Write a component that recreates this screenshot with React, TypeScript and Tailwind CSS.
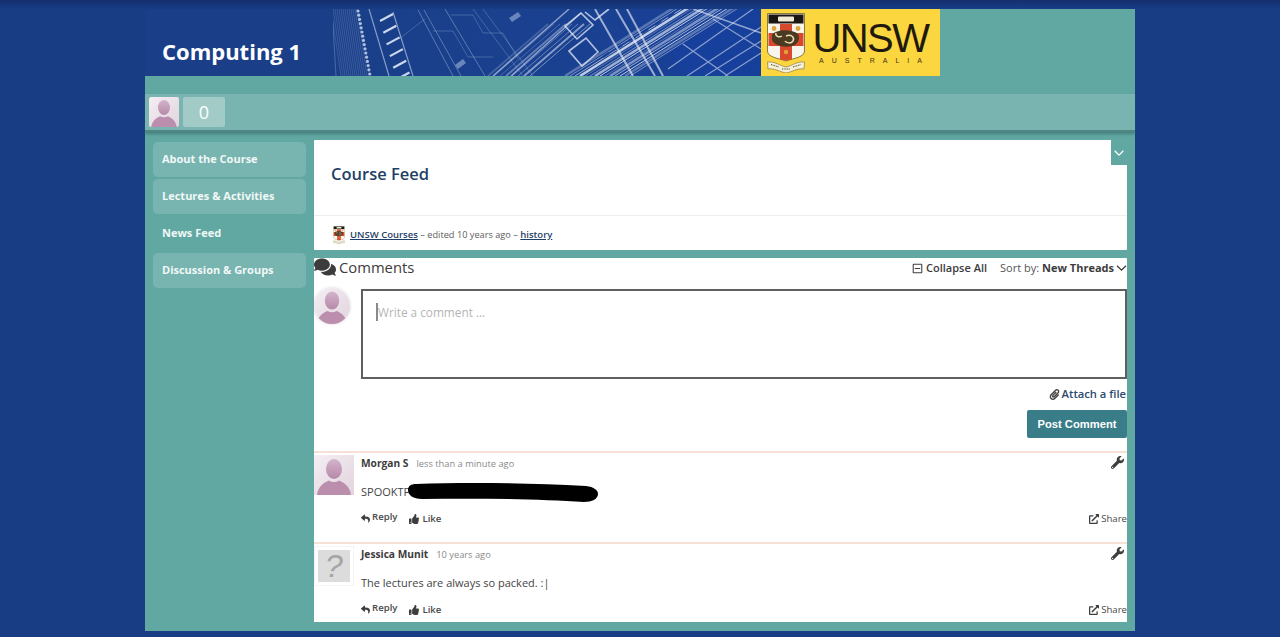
import { FaComments, FaRegMinusSquare, FaPaperclip, FaWrench, FaReply, FaThumbsUp, FaExternalLinkAlt } from "react-icons/fa";

const font = "font-['Open_Sans',sans-serif]";

function Chevron({ className = "" }: { className?: string }) {
  return (
    <svg viewBox="0 0 12 7" fill="none" stroke="currentColor" strokeWidth="1.5" className={className}>
      <path d="M0.8 0.8 L6 6 L11.2 0.8" />
    </svg>
  );
}

function Avatar({ className = "" }: { className?: string }) {
  return (
    <svg viewBox="0 0 40 40" className={className}>
      <defs>
        <linearGradient id="avbg" x1="0" y1="0" x2="1" y2="1">
          <stop offset="0" stopColor="#f4eef3" />
          <stop offset="1" stopColor="#e2d4de" />
        </linearGradient>
        <linearGradient id="avfg" x1="0" y1="0" x2="0" y2="1">
          <stop offset="0" stopColor="#d4b4cb" />
          <stop offset="1" stopColor="#b688a9" />
        </linearGradient>
      </defs>
      <rect width="40" height="40" fill="url(#avbg)" />
      <ellipse cx="20" cy="14" rx="8" ry="10" fill="url(#avfg)" />
      <path d="M3 40 C4 31 11 27 15 25.5 C18 27.5 22 27.5 25 25.5 C29 27 36 31 37 40 Z" fill="#bb8eae" />
    </svg>
  );
}

function Blueprint() {
  const rungs = [];
  for (let i = 0; i < 6; i++) {
    rungs.push(
      <path key={i} d={`M${47 + i * 3.3} ${12 + i * 11.7} L${60 + i * 3.3} ${5 + i * 11.7}`} stroke="#d5e0f3" strokeOpacity={0.95} strokeWidth={2.2} />,
    );
  }
  const hatch = [];
  for (let i = 0; i < 14; i++) {
    hatch.push(<path key={i} d={`M${-2 + i * 2} 0 L${8 + i * 2} 67`} stroke="#b9cbea" strokeOpacity={0.28} strokeWidth={0.7} />);
  }
  const beads = [];
  for (let i = 0; i < 16; i++) {
    beads.push(<circle key={i} cx={25 + i * 0.78} cy={2 + i * 4.2} r={1.6} fill="#d3dff3" fillOpacity={0.8} />);
  }
  const band = [];
  for (let i = 0; i < 14; i++) {
    const o = i * 5;
    band.push(
      <path key={i} d={`M${232 + o} 67 L${345 + o} -4`} stroke="#eef3fb" strokeOpacity={0.3 + (i % 4) * 0.16} strokeWidth={i % 3 === 0 ? 2.6 : 1} />,
    );
  }
  const dashes = [];
  for (let i = 0; i < 7; i++) {
    dashes.push(<path key={i} d={`M${270 + i * 13} ${48 - i * 8} l6 -4`} stroke="#183f92" strokeWidth={2.4} />);
  }
  const faint = [];
  for (let i = 0; i < 8; i++) {
    faint.push(<path key={i} d={`M${155 + i * 6} 67 L${215 + i * 6} 15`} stroke="#dbe5f6" strokeOpacity={0.2 + i * 0.06} strokeWidth={i % 3 === 0 ? 1.8 : 0.8} />);
  }
  return (
    <svg viewBox="0 0 428 67" preserveAspectRatio="none" className="h-[67px] w-[428px] shrink-0">
      <defs>
        <linearGradient id="bpbg" x1="0" y1="0" x2="1" y2="0">
          <stop offset="0" stopColor="#1a3f88" />
          <stop offset="0.6" stopColor="#1a4191" />
          <stop offset="1" stopColor="#163f9b" />
        </linearGradient>
        <filter id="bpblur" x="-5%" y="-5%" width="110%" height="110%">
          <feGaussianBlur stdDeviation="0.35" />
        </filter>
        <clipPath id="bpclip"><rect width="428" height="67" /></clipPath>
      </defs>
      <rect width="428" height="67" fill="url(#bpbg)" />
      <g fill="none" filter="url(#bpblur)" clipPath="url(#bpclip)">
        {hatch}
        {beads}
        <path d="M-1 0 L3 67" stroke="#b9cbea" strokeOpacity="0.3" />
        <path d="M36 0 L56 67 M60 3 L80 67" stroke="#c9d8f0" strokeOpacity="0.6" strokeWidth="1.2" />
        {rungs}
        <path d="M85 1 L120 67 M91 1 L128 67 M112 0 L152 67" stroke="#c9d8f0" strokeOpacity="0.42" strokeWidth="0.9" />
        <path d="M100 22 L120 22 L135 48 L160 48 M118 6 L140 6 L150 24 L170 24 L185 50 M66 30 L92 10" stroke="#c9d8f0" strokeOpacity="0.3" strokeWidth="0.8" />
        <path d="M122 56 L130 50 L133 54 L125 60 Z M176 9 L185 3 L188 7 L179 13 Z" fill="#a9bfe3" fillOpacity="0.55" />
        <path d="M140 0 L190 67 M150 0 L200 67" stroke="#c9d8f0" strokeOpacity="0.32" strokeWidth="0.8" />
        {faint}
        <path d="M160 67 L236 0 M178 67 L248 4" stroke="#e6edf9" strokeOpacity="0.55" strokeWidth="1.6" />
        <path d="M232 17 L248 4 L260 16 L244 30 Z M236 42 L253 29 L265 43 L249 57 Z M252 3 L262 11 L276 0" stroke="#e8eef9" strokeOpacity="0.75" strokeWidth="1.6" />
        {band}
        {dashes}
        <path d="M283 0 L322 67 M294 0 L330 67 M262 0 L300 67" stroke="#f3f6fc" strokeOpacity="0.6" strokeWidth="2" />
        <path d="M337 44 L395 6 L428 30 L428 42 L392 67 L354 67 Z" fill="#163f9b" />
        <path d="M354 67 L428 18 M372 67 L428 32 M392 67 L428 44 M335 60 L420 0 M350 35 L395 67 M380 10 L428 40" stroke="#e6edf9" strokeOpacity="0.55" strokeWidth="1.3" />
        <path d="M360 0 L428 24" stroke="#f3f6fc" strokeOpacity="0.55" strokeWidth="1.6" />
      </g>
    </svg>
  );
}

function Crest({ className = "" }: { className?: string }) {
  return (
    <svg viewBox="0 0 38 60" className={className}>
      <path d="M0.5 0.5 H37.5 V38 C37.5 44 28 45 19 48 C10 45 0.5 44 0.5 38 Z" fill="#f8f5ec" stroke="#8b7a3e" strokeWidth="1" />
      <rect x="1.5" y="1.5" width="35" height="9" fill="#1b1611" />
      <rect x="11" y="3.5" width="16" height="5" rx="1" fill="#efe9d6" />
      <path d="M13 11 H25 V46.5 L19 47.5 L13 46.5 Z M1.5 20 H36.5 V33 H1.5 Z" fill="#d8482c" />
      <circle cx="7" cy="15.5" r="2.4" fill="#e0a23a" />
      <circle cx="31" cy="15.5" r="2.4" fill="#e0a23a" />
      <circle cx="19" cy="39" r="2.2" fill="#e0a23a" />
      <path d="M5 22 C9 16 25 16 31 21 C34 26 30 32 25 33 C16 35 7 32 5 27 Z" fill="#4a3a22" />
      <path d="M9 20 C8 23 12 25 15 23 M19 23 C24 21 28 24 26 28 C24 31 19 30 18 28" fill="none" stroke="#eddfb5" strokeWidth="1.5" />
      <path d="M0.5 49 C8 48 13 53 19 54 C25 53 30 48 37.5 49 L37 56 C30 55 25 59 19 60 C13 59 8 55 1 56 Z" fill="#f4efd9" stroke="#8b7a3e" strokeWidth="0.7" />
      <path d="M4 51.5 L12 54 M15 56 L23 56 M26 54 L34 51.5" stroke="#4d4530" strokeWidth="1" strokeDasharray="1 0.7" />
    </svg>
  );
}

function Comment({ avatar, name, time, text, scribble, className }: { avatar: React.ReactNode; name: string; time: string; text: string; scribble?: boolean; className: string }) {
  return (
    <div className={`flex border-t-2 border-[#f7e0d5] ${className}`}>
      <div className="w-[47px] shrink-0 pt-[2px]">{avatar}</div>
      <div className="flex min-w-0 flex-1 flex-col">
        <div className="flex h-[22px] items-center">
          <span className="text-[10.2px] font-bold text-[#3c3c3c]">{name}</span>
          <span className="ml-[8px] text-[9.3px] text-[#8a8a8a]">{time}</span>
          <FaWrench className="mr-[3px] ml-auto size-[13px] -translate-y-[2px] text-[#3d3d3d]" />
        </div>
        <div className="relative mt-[8px] h-[18px] text-[11px] leading-[18px] text-[#444]">
          {text}
          {scribble && (
            <svg viewBox="0 0 190 21" className="absolute top-[-1px] left-[47px] h-[21px] w-[190px]">
              <path d="M8 2 C60 0 120 1 178 4 C186 5 190 8 190 12 C190 17 184 20 176 20 C130 17 70 16 14 17 C5 17 0 13 0 8 C0 4 3 2 8 2 Z" fill="#000" />
            </svg>
          )}
        </div>
        <div className="mt-[11px] flex items-center text-[9.6px] font-semibold text-[#4a4a4a]">
          <FaReply className="mr-[2px] size-[9px] -translate-y-[1px] text-[#3d3d3d]" />
          <span className="-translate-y-[2px]">Reply</span>
          <FaThumbsUp className="mr-[3px] ml-[12px] size-[10px] text-[#3d3d3d]" />
          <span>Like</span>
          <FaExternalLinkAlt className="mr-[2px] ml-auto size-[10px] text-[#3d3d3d]" />
          <span className="font-normal">Share</span>
        </div>
      </div>
    </div>
  );
}

const nav = [
  { label: "About the Course", on: true },
  { label: "Lectures & Activities", on: true },
  { label: "News Feed", on: false },
  { label: "Discussion & Groups", on: true },
];

export default function App() {
  return (
    <div className={`${font} flex h-[637px] w-[1280px] flex-col overflow-hidden bg-[#183d85]`}>
      <div className="h-[9px] shrink-0 bg-gradient-to-b from-[#142f6d] to-[#183d85]" />
      <div className="mx-auto flex h-[622px] w-[990px] flex-col bg-[#62a8a2]">
        <div className="flex h-[67px] shrink-0">
          <div className="flex w-[188px] shrink-0 items-center bg-[#1a3f88] pt-[16px] pl-[17px]">
            <h1 className="text-[22px] leading-none font-bold text-white">Computing 1</h1>
          </div>
          <Blueprint />
          <div className="flex w-[179px] shrink-0 items-center bg-[#fbd63f] pl-[6px]">
            <Crest className="h-[60px] w-[38px] shrink-0" />
            <div className="ml-[6px] flex flex-col items-center">
              <span className="font-['Liberation_Sans',sans-serif] text-[40px] leading-[36px] tracking-[-1.6px] text-[#21190f]">UNSW</span>
              <span className="ml-[8px] font-['Liberation_Sans',sans-serif] text-[7px] leading-[9px] tracking-[8px] text-[#3c3212]">AUSTRALIA</span>
            </div>
          </div>
        </div>
        <div className="mt-[18px] flex h-[38px] shrink-0 items-center gap-[4px] border-b-2 border-[#4f8582] bg-[#7ab4b1] pl-[4px] shadow-[0_2px_3px_rgba(40,90,90,0.5)]">
          <Avatar className="h-[30px] w-[30px] rounded-[2px]" />
          <div className="flex h-[30px] w-[42px] items-center justify-center rounded-[2px] bg-[#a2cbc8] text-[18px] text-white">0</div>
        </div>
        <div className="flex min-h-0 flex-1 pt-[8px]">
          <nav className="ml-[8px] flex w-[153px] shrink-0 flex-col gap-[2px] pt-[2px]">
            {nav.map((n) => (
              <div key={n.label} className={`flex h-[35px] items-center rounded-[5px] pl-[9px] text-[11px] font-bold text-[#f1f8f7] ${n.on ? "bg-[#78b4b0]" : ""}`}>
                {n.label}
              </div>
            ))}
          </nav>
          <main className="ml-[8px] flex w-[813px] flex-col">
            <section className="relative h-[110px] shrink-0 rounded-[1px] bg-white">
              <h2 className="flex h-[76px] items-center border-b border-[#eeeeee] pb-[7px] pl-[17px] text-[16.5px] font-semibold text-[#1f3f66]">Course Feed</h2>
              <div className="flex h-[33px] items-center pt-[5px] pl-[19px] text-[9.2px] text-[#5c5c5c]">
                <Crest className="mr-[5px] h-[18px] w-[12px]" />
                <span className="text-[9.5px] font-semibold text-[#1f3f66] underline">UNSW Courses</span>
                <span className="mx-[2.5px]">– edited 10 years ago –</span>
                <span className="text-[9.5px] font-semibold text-[#1f3f66] underline">history</span>
              </div>
              <div className="absolute top-0 right-0 flex h-[25px] w-[16px] items-center justify-center bg-[#62a8a2] text-white">
                <Chevron className="h-[6px] w-[10px]" />
              </div>
            </section>
            <section className="mt-[8px] flex min-h-0 flex-1 flex-col rounded-t-[1px] bg-white">
              <div className="flex h-[20px] shrink-0 items-center text-[#3c3c3c]">
                <FaComments className="size-[22px] shrink-0 -translate-y-[1px]" />
                <span className="ml-[3px] -translate-y-px text-[14.8px]">Comments</span>
                <FaRegMinusSquare className="ml-auto size-[11px]" />
                <span className="ml-[3px] text-[11px] font-semibold">Collapse All</span>
                <span className="ml-[13px] text-[11px] text-[#555]">Sort by:</span>
                <span className="ml-[3px] text-[11px] font-bold">New Threads</span>
                <Chevron className="ml-[2px] h-[6px] w-[11px]" />
              </div>
              <div className="mt-[10px] flex h-[163px] shrink-0">
                <div className="w-[47px] shrink-0">
                  <Avatar className="h-[36px] w-[36px] rounded-full shadow-[0_0_3px_rgba(150,120,145,0.4)]" />
                </div>
                <div className="flex flex-1 flex-col items-end">
                  <div className="mt-px flex h-[90px] w-full items-start border-2 border-[#5f5f5f] bg-white pt-[12px] pl-[13px] text-[11.8px] leading-[18px] text-[#b5b5b5]">
                    <span className="h-[18px] border-l-2 border-[#8a8a8a]">Write a comment ...</span>
                  </div>
                  <div className="mt-[7px] flex h-[16px] items-center pr-px text-[11.2px] font-semibold text-[#2c4a70]">
                    <FaPaperclip className="mr-[2px] size-[11px] text-[#444]" />
                    Attach a file
                  </div>
                  <div className="mt-[8px] flex h-[28px] w-[100px] items-center justify-center rounded-[2px] bg-[#387d88] font-['Liberation_Sans',sans-serif] text-[11.2px] font-bold text-white">
                    Post Comment
                  </div>
                </div>
              </div>
              <Comment className="h-[91px] shrink-0" avatar={<Avatar className="h-[40px] w-[40px]" />} name="Morgan S" time="less than a minute ago" text="SPOOKTF" scribble />
              <Comment
                className="min-h-0 flex-1"
                avatar={
                  <div className="flex h-[40px] w-[40px] items-center justify-center border border-[#f4f4f4]">
                    <div className="flex h-[32px] w-[32px] items-center justify-center bg-[#dcdcdc] font-['Liberation_Sans',sans-serif] text-[32px] leading-none font-light text-[#a5a5a5] italic">?</div>
                  </div>
                }
                name="Jessica Munit"
                time="10 years ago"
                text="The lectures are always so packed. :|"
              />
            </section>
          </main>
        </div>
        <div className="h-[9px] shrink-0" />
      </div>
    </div>
  );
}
